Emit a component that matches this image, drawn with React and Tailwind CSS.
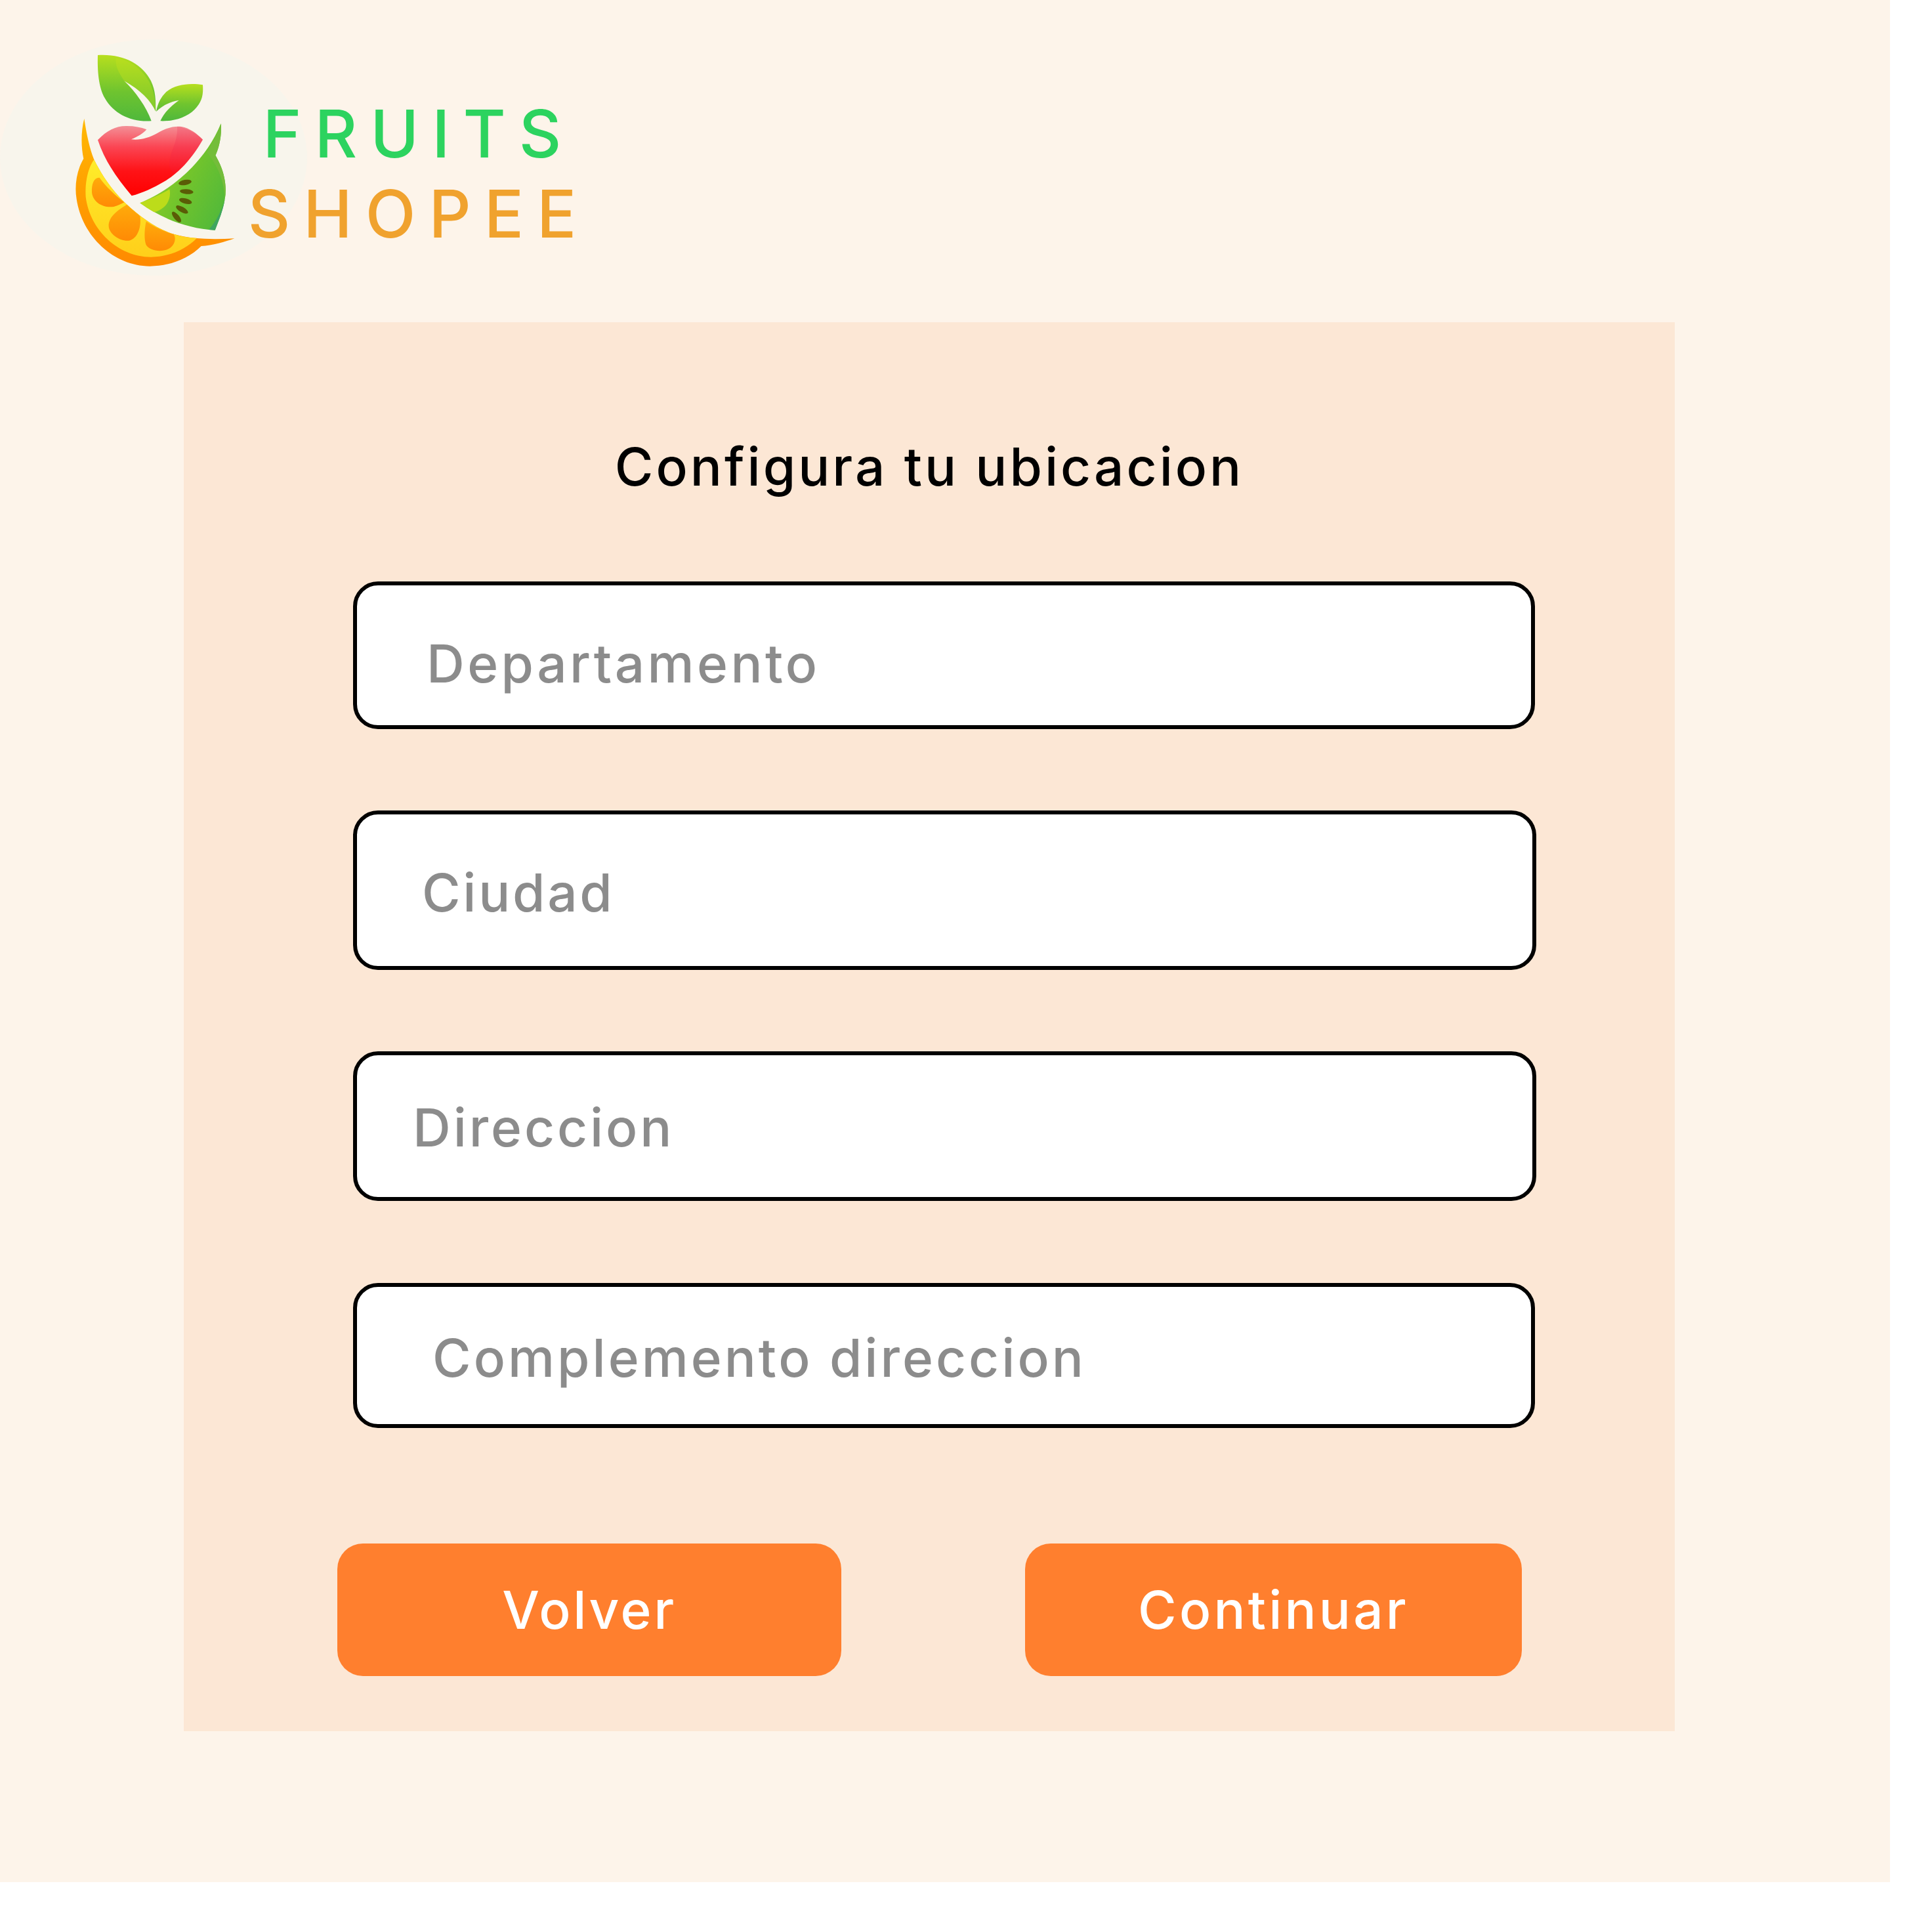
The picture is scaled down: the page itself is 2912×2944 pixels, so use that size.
import React from "react";

function Logo() {
  return (
    <svg viewBox="0 0 1500 1200" className="w-[500px] h-[400px] shrink-0 mt-[40px]">
      <defs>
        <linearGradient id="leaf" x1="0" y1="0" x2="0" y2="1">
          <stop offset="0" stopColor="#b7df1e" />
          <stop offset="0.55" stopColor="#6fc42f" />
          <stop offset="1" stopColor="#4fb83c" />
        </linearGradient>
        <linearGradient id="apple" x1="0" y1="0" x2="0" y2="1">
          <stop offset="0" stopColor="#f39097" />
          <stop offset="0.3" stopColor="#fb4553" />
          <stop offset="0.65" stopColor="#ff1216" />
          <stop offset="1" stopColor="#ff0000" />
        </linearGradient>
        <linearGradient id="kiwi" x1="0" y1="0.2" x2="1" y2="0.8">
          <stop offset="0" stopColor="#a4d420" />
          <stop offset="0.55" stopColor="#72c42c" />
          <stop offset="1" stopColor="#52b93a" />
        </linearGradient>
        <linearGradient id="rind" x1="0" y1="0" x2="0" y2="1">
          <stop offset="0" stopColor="#ffb905" />
          <stop offset="0.5" stopColor="#ff9f00" />
          <stop offset="1" stopColor="#ff8a00" />
        </linearGradient>
        <linearGradient id="pulp" x1="0" y1="0" x2="0" y2="1">
          <stop offset="0" stopColor="#ffec2a" />
          <stop offset="1" stopColor="#ffcf1a" />
        </linearGradient>
        <linearGradient id="seg" x1="0" y1="0" x2="0" y2="1">
          <stop offset="0" stopColor="#ffab0a" />
          <stop offset="1" stopColor="#ff8a05" />
        </linearGradient>
      </defs>
      <ellipse cx="702" cy="600" rx="702" ry="540" fill="#f8f5ec" />
      <path d="M447,132 C560,125 650,170 690,250 C712,295 712,340 712,390 C690,340 640,290 568,250 C620,300 670,370 692,433 C600,440 520,400 480,330 C450,280 445,200 447,132 Z" fill="url(#leaf)" />
      <path d="M530,145 C600,155 650,200 680,250 C705,295 711,340 712,390 C690,340 640,290 568,250 C545,215 525,185 530,145 Z" fill="#c3e21d" opacity="0.4" />
      <path d="M927,268 C870,258 800,265 760,300 C735,325 722,350 714,390 C745,360 780,345 818,338 C780,365 750,395 733,433 C790,435 850,420 890,380 C925,345 930,310 927,268 Z" fill="url(#leaf)" />
      <path d="M385,422 C370,480 370,550 382,605 C350,660 340,730 350,790 C375,960 520,1097 685,1097 C770,1097 860,1065 920,1005 C970,1003 1030,985 1072,970 C980,975 880,975 800,952 C720,930 640,870 580,815 C520,760 470,690 430,610 C410,560 395,490 385,422 Z" fill="url(#rind)" />
      <path d="M430,610 C400,650 388,720 392,780 C410,930 540,1055 690,1055 C770,1055 850,1020 900,968 C880,968 840,965 800,952 C720,930 640,870 580,815 C520,760 470,690 430,610 Z" fill="url(#pulp)" />
      <path d="M455,692 C430,690 418,720 420,760 C425,805 470,832 520,825 C540,820 555,812 568,805 C525,770 485,735 455,692 Z" fill="url(#seg)" />
      <path d="M580,815 C530,845 495,875 497,915 C499,950 550,985 590,980 C630,972 648,915 640,868 C620,850 600,835 580,815 Z" fill="url(#seg)" />
      <path d="M668,892 C660,930 658,975 668,1000 C685,1030 750,1035 780,1012 C800,995 805,970 795,952 C750,938 705,918 668,892 Z" fill="url(#seg)" />
      <path d="M447,520 C490,475 530,455 580,456 C615,456 645,462 670,472 C655,490 630,505 600,517 C640,522 680,510 720,488 C755,468 790,455 830,459 C865,465 900,490 927,518 C880,600 820,670 750,710 C700,740 650,762 602,775 C540,700 480,620 447,520 Z" fill="url(#apple)" />
      <path d="M810,458 C850,462 900,490 927,518 C890,582 850,630 800,672 C765,660 770,610 790,560 C805,525 812,490 810,458 Z" fill="#f0204a" opacity="0.2" />
      <path d="M1010,445 C1015,500 1000,560 985,590 C1020,650 1040,720 1028,790 C1020,840 1000,890 983,932 C860,925 740,880 640,808 C760,760 930,640 1010,445 Z" fill="url(#kiwi)" />
      <path d="M640,808 C690,788 735,768 775,745 C785,790 760,835 705,850 C682,838 660,822 640,808 Z" fill="#bcdc1a" />
      <path d="M1010,445 C1015,500 1000,560 985,590 C1020,650 1040,720 1028,790 C1025,720 1005,650 945,575 C970,540 995,490 1010,445 Z" fill="#74bd3a" />
      <path d="M983,932 L955,930 C990,890 1015,840 1028,790 C1020,840 1000,890 983,932 Z" fill="#3fa560" />
      <g fill="#5a5c06">
        <ellipse cx="846" cy="714" rx="30" ry="12" transform="rotate(-10 846 714)" />
        <ellipse cx="853" cy="756" rx="31" ry="11" transform="rotate(5 853 756)" />
        <ellipse cx="848" cy="799" rx="30" ry="12" transform="rotate(15 848 799)" />
        <ellipse cx="832" cy="838" rx="31" ry="12" transform="rotate(30 832 838)" />
        <ellipse cx="807" cy="872" rx="30" ry="12" transform="rotate(50 807 872)" />
      </g>
    </svg>
  );
}

function Field({ label, className }) {
  return (
    <div className={"ml-[258px] border-[6px] border-black bg-white rounded-[38px] text-[80px] leading-none font-medium text-[#8c8c8c] " + className}>
      {label}
    </div>
  );
}

function Btn({ label, className }) {
  return (
    <div className={"h-[202px] rounded-[39px] bg-[#ff7f2e] flex items-center justify-center text-white text-[80px] leading-none font-medium " + className}>
      {label}
    </div>
  );
}

export default function App() {
  return (
    <div className="w-[2880px] h-[2868px] bg-[#fdf4ea] font-['Inter',sans-serif]">
      <header className="h-[491px] flex items-start">
        <Logo />
        <div className="-ml-[140px] mt-[143px] w-[556px] text-center text-[100px] leading-[122px] font-medium tracking-[20px]">
          <div className="text-[#2cd35f]">FRUITS</div>
          <div className="text-[#f0a22e]">SHOPEE</div>
        </div>
      </header>
      <main className="ml-[280px] w-[2272px] h-[2147px] bg-[#fce7d5] flex flex-col">
        <h1 className="pt-[180px] text-center text-[80px] leading-none font-medium tracking-[4px] text-black">Configura tu ubicacion</h1>
        <Field label="Departamento" className="mt-[135px] w-[1801px] h-[225px] pl-[106px] pt-[79px] tracking-[4.4px]" />
        <Field label="Ciudad" className="mt-[124px] w-[1803px] h-[243px] pl-[99px] pt-[79px] tracking-[3.7px]" />
        <Field label="Direccion" className="mt-[124px] w-[1803px] h-[228px] pl-[85px] pt-[70px] tracking-[3.9px]" />
        <Field label="Complemento direccion" className="mt-[125px] w-[1801px] h-[221px] pl-[115px] pt-[68px] tracking-[4px]" />
        <div className="mt-[176px] ml-[234px] flex gap-[280px]">
          <Btn label="Volver" className="w-[768px] tracking-[3.6px]" />
          <Btn label="Continuar" className="w-[757px] tracking-[4.2px]" />
        </div>
      </main>
    </div>
  );
}
